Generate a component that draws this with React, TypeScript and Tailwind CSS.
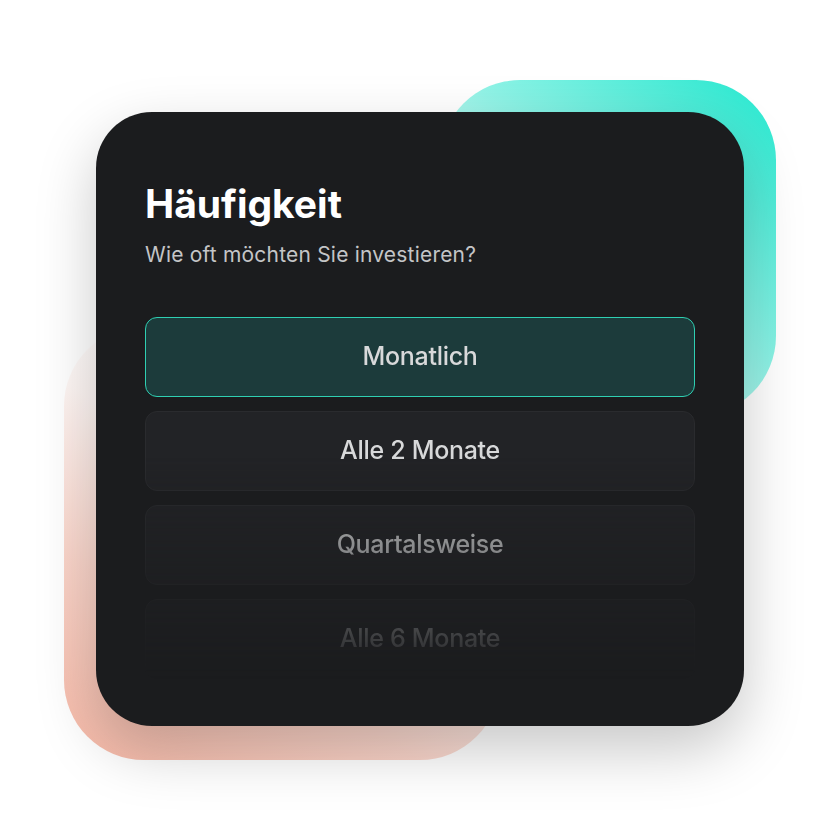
import React from "react";

const options = [
  { label: "Monatlich", selected: true },
  { label: "Alle 2 Monate", selected: false },
  { label: "Quartalsweise", selected: false },
  { label: "Alle 6 Monate", selected: false },
];

export default function App() {
  return (
    <div
      className="relative w-[840px] h-[840px] bg-white overflow-hidden"
      style={{ fontFamily: "Inter, 'Noto Sans', sans-serif" }}
    >
      {/* decorative blobs */}
      <div className="absolute left-[440px] top-[80px] w-[336px] h-[336px] rounded-[80px] bg-[linear-gradient(to_bottom_left,#24e8cf_0%,rgba(36,232,207,0.5)_45%,rgba(36,232,207,0.06)_80%,rgba(36,232,207,0)_100%)]" />
      <div className="absolute left-[64px] top-[326px] w-[436px] h-[434px] rounded-[80px] bg-[linear-gradient(30deg,#f6b8a6_0%,rgba(246,184,166,0.6)_30%,rgba(246,184,166,0.12)_55%,rgba(246,184,166,0)_70%)]" />

      <div className="relative pt-[112px] pl-[96px]">
        <div className="w-[648px] h-[614px] rounded-[56px] bg-[#1b1c1e] shadow-[0_24px_60px_rgba(0,0,0,0.22)] pl-[49px] pr-[49px] pt-[70px] flex flex-col">
          <h1 className="text-[39px] leading-[44px] font-bold text-white">
            Häufigkeit
          </h1>
          <p className="mt-[16px] text-[21px] leading-[26px] text-[#c4c5c7] tracking-[0.2px]">
            Wie oft möchten Sie investieren?
          </p>
          <div className="mt-[49px] h-[362px] overflow-hidden flex flex-col gap-[14px] [mask-image:linear-gradient(to_bottom,black_38%,transparent_100%)]">
            {options.map((o) => (
              <div
                key={o.label}
                className={
                  o.selected
                    ? "shrink-0 h-[80px] rounded-[12px] border-[1.5px] border-[#2fcfb2] bg-[#1c3b3b] flex items-center justify-center"
                    : "shrink-0 h-[80px] rounded-[12px] border border-[#2a2b2e] bg-[#222326] flex items-center justify-center"
                }
              >
                <span className="text-[25px] font-medium tracking-[-0.3px] text-[#d8d9da]">{o.label}</span>
              </div>
            ))}
          </div>
        </div>
      </div>
    </div>
  );
}
